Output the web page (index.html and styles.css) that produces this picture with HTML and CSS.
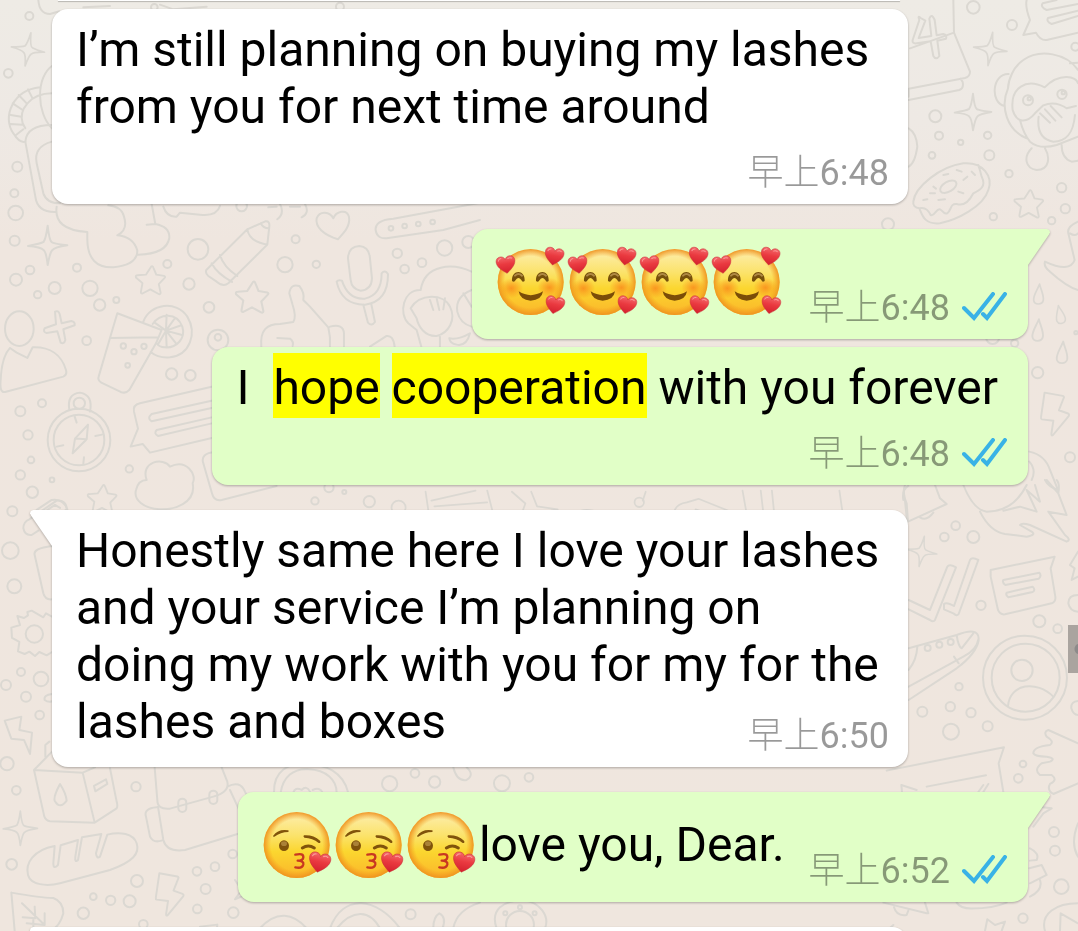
FILE: index.html
```html
<!DOCTYPE html>
<html lang="en">
<head>
<meta charset="utf-8">
<meta name="viewport" content="width=device-width, initial-scale=1">
<title>Chat</title>
<link rel="stylesheet" href="styles.css">
</head>
<body>
<svg class="defs" aria-hidden="true">
  <defs>
    <linearGradient id="skin" x1="0" y1="0" x2="0" y2="1">
      <stop offset="0" stop-color="#fdeeb0"/><stop offset=".35" stop-color="#fbe36c"/><stop offset=".6" stop-color="#fbd62f"/><stop offset="1" stop-color="#fbb52a"/>
    </linearGradient>
    <radialGradient id="rim" cx=".5" cy=".5" r=".5">
      <stop offset=".78" stop-color="#f39a1e" stop-opacity="0"/><stop offset="1" stop-color="#ee9220" stop-opacity=".95"/>
    </radialGradient>
    <radialGradient id="blush"><stop offset="0" stop-color="#f9861c" stop-opacity=".8"/><stop offset="1" stop-color="#f9861c" stop-opacity="0"/></radialGradient>
    <linearGradient id="red" x1="0" y1="0" x2="0" y2="1"><stop offset="0" stop-color="#f4686b"/><stop offset=".45" stop-color="#ea3a40"/><stop offset="1" stop-color="#d4202d"/></linearGradient>
    <symbol id="heart" viewBox="0 0 60 56" overflow="visible">
      <path d="M30 54C20 46 2 34 1 18C0 6 8 1 16 1C23 1 28 5 30 11C32 5 37 1 44 1C52 1 60 6 59 18C58 34 40 46 30 54Z" fill="url(#red)" stroke="#c92834" stroke-width="1.5"/>
      <path d="M8 13Q10 6 17 6M38 9Q44 5 50 9" fill="none" stroke="#fa9a97" stroke-width="3" stroke-linecap="round"/>
    </symbol>
    <symbol id="loved" viewBox="54 47 216 216" overflow="visible">
      <circle cx="155" cy="155" r="99" fill="url(#skin)"/><circle cx="155" cy="155" r="99" fill="url(#rim)"/>
      <ellipse cx="97" cy="174" rx="36" ry="30" fill="url(#blush)"/><ellipse cx="211" cy="172" rx="36" ry="30" fill="url(#blush)"/>
      <path d="M99 152C97 116 139 116 137 152Q130 158 127 149Q118 137 110 149Q106 157 99 152ZM171 152C169 116 211 116 209 152Q202 158 199 149Q190 137 182 149Q178 157 171 152Z" fill="#76500b"/>
      <path d="M108 136Q118 126 129 136M180 136Q190 126 201 136" fill="none" stroke="#b08a45" stroke-width="6" stroke-linecap="round"/>
      <path d="M119 183Q155 206 192 183Q188 210 155 211Q123 209 119 183Z" fill="#7b4d08"/>
      <use href="#heart" x="52" y="76" width="58" height="56" transform="rotate(-8 81 104)"/>
      <use href="#heart" x="196" y="51" width="58" height="56" transform="rotate(10 225 79)"/>
      <use href="#heart" x="198" y="197" width="58" height="56" transform="rotate(12 227 225)"/>
    </symbol>
    <symbol id="kiss" viewBox="45 56 216 216" overflow="visible">
      <circle cx="146" cy="164" r="99" fill="url(#skin)"/><circle cx="146" cy="164" r="99" fill="url(#rim)"/>
      <path d="M75 137Q91 115 120 120Q124 121 121 125Q98 125 79 139Q75 140 75 137ZM168 135Q196 133 216 151Q220 158 212 158Q194 143 169 142Q164 138 168 135Z" fill="#80530b"/>
      <ellipse cx="108" cy="166" rx="15" ry="16" fill="#80530b"/><ellipse cx="108" cy="160" rx="9" ry="7" fill="#aa8138"/>
      <path d="M163 173Q181 161 199 173" fill="none" stroke="#80530b" stroke-width="9" stroke-linecap="round"/>
      <path d="M142 193Q167 187 166 201Q165 211 149 211Q168 212 166 222Q162 236 142 231" fill="none" stroke="#c83721" stroke-width="7" stroke-linecap="round" stroke-linejoin="round"/>
      <use href="#heart" x="181" y="186" width="66" height="63" transform="rotate(12 214 217)"/>
    </symbol>
    <symbol id="ticks" viewBox="0 0 45 29">
      <path d="M2 16L12 26L31 2M21 22L25 26L43 2" fill="none" stroke="#39b2e6" stroke-width="4" stroke-linecap="round" stroke-linejoin="miter"/>
    </symbol>
    <symbol id="spark" viewBox="-60 -60 120 120" overflow="visible"><path d="M0 -58Q5 -10 14 -8Q28 -3 58 0Q20 6 14 14Q7 20 0 58Q-4 20 -12 14Q-20 5 -58 2Q-20 -5 -12 -10Q-5 -20 0 -58Z"/></symbol>
    <symbol id="star" viewBox="-50 -50 100 100" overflow="visible"><path d="M3 -44Q7 -48 10 -40L19 -18L44 -14Q50 -12 45 -7L27 12L33 40Q32 47 25 43L0 29L-25 42Q-31 43 -30 36L-25 9L-46 -9Q-48 -16 -41 -16L-14 -18Z"/></symbol>
    <symbol id="bolt" viewBox="0 0 90 145" overflow="visible"><path d="M12 4L68 14Q74 16 70 22L56 58L84 68Q89 70 86 76L38 134Q32 138 33 130L39 90L4 86Q0 85 1 80Z"/></symbol>
    <symbol id="drop" viewBox="0 0 40 80" overflow="visible"><path d="M24 3C28 22 40 42 37 60C33 78 6 77 3 60C1 44 15 25 24 3Z"/></symbol>
  </defs>
</svg>

<main class="chat">
  <svg class="wallpaper" viewBox="0 0 1078 931" preserveAspectRatio="xMinYMin slice" aria-hidden="true">
    <g transform="scale(.3333)">
      <path d="M115 0Q118 42 150 42L178 34M250 22L330 18M480 14L520 28L620 20"/>
      <use href="#spark" x="32" y="96" width="104" height="104" transform="rotate(10 84 148)"/>
      <use href="#spark" x="82" y="675" width="122" height="122"/>
      <path d="M160 195C105 230 110 340 156 385M120 262C40 270 5 350 40 400Q58 430 76 425M156 280C90 280 55 330 68 370L76 385M32 345L64 350M38 310L68 330M56 285L80 310M84 268L98 296M32 372L66 374M48 405L70 388"/>
      <path d="M156 375Q80 375 76 425L106 590Q112 638 168 636M156 425Q100 440 110 490L130 580Q140 610 180 610"/>
      <path d="M170 620Q160 690 262 696L262 720Q264 805 340 802Q412 795 412 752Q400 710 352 706M352 706Q385 690 372 650Q365 620 325 616M455 612L466 672Q510 680 508 714Q500 762 414 764M440 674L466 672"/>
      <path d="M490 620Q500 652 530 650L540 638L600 644Q650 650 660 618M805 622L830 620M840 612Q855 640 832 658M870 620L900 620M915 612Q930 640 905 652"/>
      <path d="M619 810L742 688L796 664Q810 662 808 680L802 734L685 850Q670 862 650 845L625 828Q615 820 619 810ZM742 688Q748 725 802 734M782 670Q790 685 806 685M660 765Q670 800 712 828M635 790Q650 820 696 846"/>
      <path d="M1014 718C970 705 945 680 950 655C960 630 990 635 1000 655C1008 635 1040 625 1047 650C1052 680 1030 700 1014 718Z"/>
      <path d="M1440 608L1180 656Q1125 660 1127 690Q1132 720 1165 714L1330 690L1440 660"/>
      <path d="M1044 775Q1045 740 1078 738Q1108 740 1110 775L1116 835Q1115 870 1082 872Q1055 868 1052 840ZM1010 845Q1015 838 1026 842Q1045 900 1095 896Q1145 885 1145 820Q1155 808 1164 822Q1165 905 1095 914Q1025 915 1010 845ZM1090 914L1104 968Q1115 980 1125 966L1114 912"/>
      <use href="#star" x="402" y="794" width="98" height="94"/>
      <use href="#star" x="704" y="840" width="104" height="104"/>
      <use href="#star" x="260" y="1450" width="92" height="94"/>
      <ellipse cx="58" cy="986" rx="43" ry="52"/><path d="M30 1044Q5 1070 2 1140Q-2 1180 15 1176L190 1130Q202 1125 198 1110C185 1065 150 1040 98 1042L82 1074L50 1058Z"/>
      <path d="M165 935Q175 930 179 942L185 970L214 963Q226 965 224 976L190 988L196 1020Q192 1034 182 1028L172 994L140 999Q128 996 134 985L168 973Z"/>
      <path d="M352 940L485 990L468 1030L388 1170Q378 1182 362 1176L304 1148Q292 1140 296 1130L330 1014ZM330 1014L476 1012M430 965C450 910 530 900 562 950C592 1000 570 1065 510 1072Q475 1075 452 1056M458 972C480 940 530 935 547 980C558 1015 530 1045 494 1042Q478 1042 470 1030M498 992L500 944M498 992L525 954M498 992L544 976M498 992L546 1005M498 992L528 1030M498 992L500 1042M498 992L476 1030M498 992L464 968"/>
      <path d="M784 1040C780 990 800 972 840 972L880 966Q890 950 878 915L868 880Q872 850 898 858Q915 880 910 900L930 920L985 982Q992 1010 990 1040M832 1014L870 1016Q882 1025 878 1038M990 980Q1030 970 1032 1000L1032 1040M1110 1040L1160 1008Q1180 1005 1184 1040"/>
      <circle cx="237" cy="1320" r="94"/><circle cx="237" cy="1320" r="76"/><path d="M208 1230Q200 1182 240 1178Q280 1185 270 1235"/><circle cx="238" cy="1210" r="17"/><path d="M264 1274L225 1316L218 1360L260 1318ZM225 1316L260 1318M224 1250L230 1268M170 1340L190 1336M252 1372L250 1390M286 1308L306 1304"/>
      <path d="M645 1158L420 1210Q398 1215 402 1235L414 1286L392 1340L428 1332L450 1358L645 1312M645 1200L455 1242Q440 1255 455 1264L645 1222M645 1250L470 1290Q460 1300 474 1308L645 1268"/>
      <path d="M440 1440C420 1385 490 1370 510 1400C560 1375 592 1425 578 1450C590 1510 520 1530 480 1528C430 1525 400 1500 408 1470Q415 1440 440 1440ZM645 1356Q600 1360 610 1390L636 1480Q642 1505 665 1500L830 1458"/>
      <path d="M110 1530L155 1500Q190 1495 202 1528M142 1530L165 1515L180 1524"/>
      <g>
        <circle cx="88" cy="48" r="12"/><circle cx="25" cy="220" r="13"/><circle cx="52" cy="500" r="15"/><circle cx="43" cy="580" r="12"/><circle cx="47" cy="639" r="22"/><circle cx="44" cy="722" r="15"/><circle cx="90" cy="810" r="13"/><circle cx="48" cy="839" r="18"/><circle cx="231" cy="803" r="12"/><circle cx="113" cy="884" r="11"/><circle cx="164" cy="864" r="18"/><circle cx="270" cy="865" r="23"/><circle cx="299" cy="915" r="17"/><circle cx="349" cy="900" r="9"/><circle cx="502" cy="792" r="12"/><circle cx="594" cy="748" r="31"/><circle cx="567" cy="852" r="17"/><circle cx="627" cy="922" r="16"/><circle cx="654" cy="1020" r="31"/><circle cx="654" cy="1012" r="10"/><circle cx="855" cy="794" r="23"/><circle cx="887" cy="718" r="12"/><circle cx="949" cy="793" r="11"/><circle cx="260" cy="1022" r="13"/><circle cx="515" cy="1122" r="17"/><circle cx="571" cy="1126" r="16"/><circle cx="370" cy="1038" r="8"/><circle cx="402" cy="1055" r="8"/><circle cx="432" cy="1039" r="8"/><circle cx="383" cy="1096" r="7"/><circle cx="61" cy="1234" r="15"/><circle cx="126" cy="1210" r="12"/><circle cx="84" cy="1305" r="14"/><circle cx="93" cy="1380" r="10"/><circle cx="61" cy="1425" r="14"/><circle cx="156" cy="1440" r="7"/><circle cx="388" cy="1407" r="11"/><circle cx="97" cy="1477" r="17"/><circle cx="37" cy="1534" r="15"/><circle cx="725" cy="618" r="16"/><circle cx="987" cy="1463" r="14"/><circle cx="1033" cy="1476" r="6"/><circle cx="945" cy="1503" r="11"/><circle cx="1108" cy="1505" r="17"/>
        <circle cx="1173" cy="685" r="7"/><circle cx="1214" cy="678" r="7"/><circle cx="1255" cy="672" r="7"/><circle cx="1298" cy="666" r="7"/><circle cx="1192" cy="760" r="14"/><circle cx="1214" cy="807" r="13"/><circle cx="1266" cy="788" r="13"/><circle cx="1334" cy="744" r="23"/><circle cx="1405" cy="726" r="18"/><circle cx="463" cy="22" r="10"/><circle cx="1020" cy="20" r="12"/>
      </g>
      <path d="M1262 870C1275 790 1360 790 1415 815M1260 870C1210 870 1195 940 1225 970L1250 990M1232 925C1260 880 1330 880 1350 920C1370 960 1345 1000 1310 1008C1275 1010 1255 980 1250 955L1232 925M1250 990L1264 1040M1290 900L1300 930M1310 895L1318 930M1335 895L1330 928M1415 870Q1365 890 1372 935Q1380 970 1415 980M1390 880L1415 920M1348 1015Q1375 1020 1410 1000Q1400 1040 1370 1034Q1350 1030 1348 1015M1320 1010L1320 1040"/>
    </g>
    <g transform="translate(0 480) scale(.3333)">
      <path d="M70 145Q70 125 88 118L170 62Q200 60 200 88L140 135M70 145Q75 168 95 165L115 152M156 198Q98 205 104 225L130 340Q135 360 156 358"/>
      <circle cx="103" cy="462" r="26"/><path d="M156 410L138 400L130 412L95 392L82 396L84 406L72 414L52 408L60 435L34 443L36 474L58 486L54 514L74 522L88 515L105 528L118 516L140 526L156 516"/>
      <circle cx="31" cy="212" r="25"/><circle cx="43" cy="319" r="21"/><circle cx="63" cy="576" r="12"/><circle cx="123" cy="597" r="22"/><circle cx="18" cy="615" r="15"/><circle cx="78" cy="650" r="15"/><circle cx="119" cy="705" r="13"/><circle cx="21" cy="851" r="20"/><circle cx="49" cy="931" r="13"/><circle cx="35" cy="1153" r="16"/><circle cx="408" cy="920" r="14"/>
      <path d="M156 642Q130 645 134 660Q145 668 156 664M14 722L64 710L58 750L96 758L90 822L72 780L34 776Z"/>
      <path d="M156 815L102 870L133 1010Q138 1022 150 1024L284 1028L350 985Q354 978 350 965L330 865M102 870L248 878L284 1028M248 878L285 862M136 830L136 795L148 785M180 912Q160 950 164 962Q180 990 200 962Q198 940 180 912ZM282 918L318 898L322 912L286 934Z"/>
      <use href="#spark" x="8" y="992" width="106" height="106"/>
      <path d="M164 1098C100 1110 75 1150 84 1185C92 1215 140 1220 180 1210L330 1170C400 1145 420 1120 410 1090C400 1060 360 1055 322 1064L300 1130Q290 1138 288 1120L304 1062L246 1072L234 1140Q224 1150 226 1130L234 1080L182 1096L174 1155Q160 1170 160 1150Z"/>
      <path d="M464 862L472 960Q472 990 510 986L640 950Q690 935 682 905L665 862M474 980L490 1080Q500 1118 555 1110L720 1060M470 982Q430 985 438 1010L450 1070Q460 1090 485 1082M682 920Q720 900 735 935L742 950M690 930L720 995"/>
      <rect x="535" y="956" width="24" height="40" rx="12"/><rect x="628" y="932" width="24" height="40" rx="12"/>
      <use href="#bolt" x="466" y="1176" width="88" height="140"/>
      <path d="M34 1238Q130 1255 160 1254Q190 1265 190 1300Q180 1340 150 1354M34 1238L44 1353M66 1270L134 1335M104 1280L106 1315L68 1312M134 1300L134 1335L80 1330M100 1315L100 1350"/>
      <circle cx="411" cy="1203" r="18"/><circle cx="280" cy="1250" r="10"/><circle cx="332" cy="1261" r="14"/><circle cx="389" cy="1264" r="18"/><circle cx="250" cy="1300" r="17"/><circle cx="591" cy="1174" r="13"/><circle cx="645" cy="1160" r="13"/><circle cx="617" cy="1227" r="15"/><circle cx="592" cy="1287" r="13"/><circle cx="698" cy="1122" r="13"/><circle cx="700" cy="1298" r="16"/><circle cx="430" cy="1333" r="13"/>
      <path d="M705 1200L725 1230L705 1258L735 1245M600 1340L652 1334L650 1354"/>
      <path d="M822 938C820 870 870 850 910 852C980 850 1030 880 1044 936M842 938C850 890 880 865 925 868C980 870 1010 900 1010 938M880 938Q885 920 905 930Q920 915 930 935M938 930Q960 920 968 938M1360 862Q1370 905 1400 900Q1425 885 1400 862"/>
      <circle cx="1169" cy="911" r="23"/><circle cx="1245" cy="880" r="13"/><circle cx="1304" cy="906" r="17"/><circle cx="1506" cy="910" r="24"/><circle cx="1587" cy="892" r="13"/>
      <path d="M780 1345C830 1290 880 1300 920 1345M990 1345C1030 1240 1130 1250 1200 1345M1010 1345C1060 1285 1110 1290 1140 1345M1360 1345Q1370 1290 1440 1268M1300 1345Q1300 1310 1318 1300Q1340 1310 1328 1345"/>
      <circle cx="1232" cy="1303" r="15"/><path d="M1490 1345C1470 1290 1510 1260 1570 1262C1620 1265 1650 1310 1635 1345"/><circle cx="1560" cy="1335" r="42"/><circle cx="1560" cy="1282" r="6"/><circle cx="1516" cy="1300" r="6"/><circle cx="1604" cy="1300" r="6"/>
    </g>
    <g class="strip" transform="translate(0 480) scale(.587)">
      <path d="M725 20L735 88M735 35L810 18M740 45L830 38M830 18L848 88M770 88Q775 60 800 64Q820 75 815 88M872 20L895 40L880 82L905 60L950 50L915 45L905 20M980 88Q970 45 1010 52L1075 85M1140 88L1150 50Q1155 40 1170 38L1190 32L1210 40L1240 52L1246 88M1185 50L1208 58L1206 68L1182 62ZM1265 18L1275 75Q1290 90 1302 70L1296 18M1315 18L1322 88M1430 18L1440 88M1480 88L1490 55L1490 88M1540 20L1545 70"/>
      <circle cx="679" cy="47" r="12"/><circle cx="1089" cy="38" r="8"/><path d="M1095 35L1100 20"/>
    </g>
    <g transform="translate(880 0) scale(.3333)">
      <path d="M220 0L222 98L270 215Q270 230 255 234L86 266M90 145L222 98M86 300L238 270Q252 265 248 246L242 236M86 290L86 266M122 54Q112 45 118 60L98 120Q96 132 110 130L152 124L160 168Q168 182 178 168L172 122L198 116Q202 104 190 102L170 106L164 60Q155 38 148 56L154 108L116 114L136 62Z"/>
      <path d="M440 0Q435 20 450 60L430 105L468 98Q480 122 500 120L594 98M594 12L500 30Q480 20 488 10L530 0M594 48L515 72Q498 65 504 54L594 32"/>
      <use href="#spark" x="278" y="95" width="106" height="104" transform="rotate(8 331 147)"/><use href="#spark" x="222" y="278" width="114" height="116"/>
      <path d="M594 210C560 160 480 145 430 180C400 200 385 240 384 265C360 320 380 390 440 415M386 222C335 220 330 310 374 318M398 330C390 260 440 235 494 262C540 215 590 230 594 250M398 330C410 370 440 370 465 340L490 316C530 300 560 325 560 325L588 318M420 360Q430 400 450 425Q480 450 530 435L594 410M476 350C470 400 490 420 520 425C560 425 580 400 585 345M480 340L510 368M495 328L526 362M512 318L545 352M455 445C430 470 435 505 470 510C510 510 510 470 495 445M545 435Q545 475 575 485L594 482M570 190L594 188"/>
      <circle cx="444" cy="301" r="15"/><circle cx="448" cy="296" r="5"/><circle cx="546" cy="283" r="14"/><circle cx="550" cy="278" r="5"/>
      <path d="M86 385Q110 400 112 440Q105 490 86 500"/>
      <path d="M100 605C105 560 180 500 250 490C310 485 340 530 325 570C310 620 230 660 180 670C130 675 125 640 118 625C105 625 98 615 100 605M118 625C135 620 145 630 152 645C165 650 168 625 180 628C190 632 190 645 202 640C215 630 210 610 230 612C255 620 270 600 280 580C300 570 320 560 305 530Q300 510 295 495"/><ellipse cx="205" cy="560" rx="27" ry="15" transform="rotate(-30 205 560)"/>
      <path d="M130 600L142 598M160 560L168 566M190 525L205 522M230 510L245 515M150 580L165 580M250 540L262 530M275 515L285 525M235 575L250 580M175 600L195 598"/>
      <use href="#star" x="400" y="566" width="92" height="92"/>
      <path d="M594 665Q560 680 565 700L584 780Q570 820 495 785Q490 800 510 815Q560 860 594 870M570 700Q585 710 594 700"/>
      <use href="#drop" x="458" y="850" width="35" height="68"/><use href="#drop" x="522" y="914" width="35" height="62" transform="rotate(-15 540 945)"/><use href="#drop" x="452" y="955" width="42" height="74"/><use href="#drop" x="525" y="1022" width="42" height="74"/>
      <use href="#bolt" x="482" y="1172" width="88" height="146"/>
      <circle cx="280" cy="22" r="19"/><circle cx="396" cy="75" r="15"/><circle cx="166" cy="349" r="18"/><circle cx="177" cy="407" r="12"/><circle cx="242" cy="427" r="8"/><circle cx="323" cy="406" r="11"/><circle cx="156" cy="466" r="10"/><circle cx="328" cy="466" r="15"/><circle cx="387" cy="521" r="11"/><circle cx="545" cy="563" r="14"/><circle cx="556" cy="626" r="14"/><circle cx="515" cy="662" r="11"/><circle cx="340" cy="650" r="11"/><circle cx="24" cy="673" r="18"/><circle cx="473" cy="1118" r="17"/><circle cx="570" cy="1372" r="15"/><circle cx="404" cy="1030" r="11"/><circle cx="338" cy="1012" r="20"/><circle cx="586" cy="140" r="12"/><circle cx="588" cy="998" r="5"/>
      <path d="M448 1355Q495 1365 510 1410L534 1470Q505 1460 495 1440M448 1385Q470 1410 455 1440M70 1500Q65 1470 85 1458"/>
    </g>
    <g transform="translate(880 480) scale(.3333)">
      <path d="M75 15Q65 40 80 70L84 125L200 72L180 55L165 15M120 112Q140 125 160 98M250 15Q280 90 320 95Q400 95 440 15M300 95Q330 155 375 162L440 170Q470 165 455 155L420 135Q425 128 450 135L560 185Q575 180 555 165L505 95L560 105L535 40Q540 10 530 0M370 92L420 80L470 95L440 30L480 65L465 15M500 0L535 40"/>
      <use href="#spark" x="78" y="165" width="95" height="98" transform="rotate(10 125 212)"/>
      <path d="M86 360L150 390L202 260Q208 250 228 262L165 420Q160 428 150 420L86 388M192 372Q200 365 222 378L270 240Q276 230 295 240L236 402Q230 410 220 400L192 388Z"/>
      <path d="M332 270L524 230L512 265L526 350Q528 365 515 370L375 403Q360 405 354 390L332 290ZM370 300L478 278Q486 288 476 296L376 315Q366 308 370 300ZM380 338L458 320Q468 330 458 336L385 352Q376 345 380 338Z"/>
      <path d="M594 215L570 255L584 265L575 300L594 290M594 345Q565 345 565 370Q570 395 594 395M594 663Q572 665 574 685Q580 705 594 705"/>
      <path d="M86 505L230 465Q295 440 296 475Q290 510 250 530L86 620M86 660L230 565Q290 520 296 480M230 465Q235 500 245 505L280 460M222 530L236 550M86 570Q110 540 112 500"/>
      <circle cx="143" cy="504" r="9"/><circle cx="178" cy="494" r="9"/><circle cx="212" cy="486" r="9"/>
      <circle cx="435" cy="593" r="126"/><circle cx="437" cy="593" r="102"/><circle cx="426" cy="571" r="32"/><path d="M384 678C390 610 470 600 520 650"/>
      <circle cx="227" cy="137" r="13"/><circle cx="193" cy="171" r="13"/><circle cx="280" cy="171" r="18"/><circle cx="303" cy="376" r="14"/><circle cx="478" cy="424" r="18"/><circle cx="533" cy="446" r="13"/><circle cx="237" cy="620" r="11"/><circle cx="127" cy="695" r="15"/><circle cx="211" cy="680" r="14"/><circle cx="273" cy="698" r="14"/><circle cx="213" cy="755" r="24"/><circle cx="323" cy="739" r="15"/><circle cx="429" cy="852" r="10"/><circle cx="415" cy="895" r="13"/><circle cx="522" cy="1056" r="15"/><circle cx="525" cy="1112" r="15"/><circle cx="544" cy="1220" r="22"/><circle cx="429" cy="1315" r="14"/>
      <path d="M20 872L372 802L356 850L370 936M140 920L318 886M66 936L64 915L110 930M295 936L310 915M310 936L325 912M594 790L505 750Q490 755 500 770Q525 785 510 795Q460 800 460 820Q465 830 500 830Q530 835 510 845L485 850Q460 870 480 885L515 885Q535 900 510 912Q500 930 520 942L594 910M594 1030Q570 1090 594 1130M450 1105Q480 1120 470 1140L450 1142M448 1165L485 1155L500 1185L450 1210M480 1200Q490 1230 450 1250M460 1040L490 1000L515 985L475 980L460 1005"/>
      <path d="M230 1268Q240 1285 275 1286Q340 1285 380 1268M10 1268L140 1300L145 1300L135 1268M42 1282Q50 1310 80 1305L85 1292M495 1353C480 1300 530 1270 594 1270M540 1353L542 1300L594 1330M315 1353L322 1318L345 1335L375 1325L365 1353M20 1353L40 1335"/>
    </g>
  </svg>

  <div class="edge-above" aria-hidden="true"></div>

  <article class="bubble received">
    <p class="text">I’m still planning on buying my lashes from you for next time around</p>
    <footer class="meta"><time datetime="06:48"><span class="period">早上</span>6:48</time></footer>
  </article>

  <article class="bubble sent inline tail first">
    <p class="text"><svg class="emoji" role="img" aria-label="smiling face with hearts"><use href="#loved"/></svg><svg class="emoji" role="img" aria-label="smiling face with hearts"><use href="#loved"/></svg><svg class="emoji" role="img" aria-label="smiling face with hearts"><use href="#loved"/></svg><svg class="emoji" role="img" aria-label="smiling face with hearts"><use href="#loved"/></svg></p>
    <footer class="meta"><time datetime="06:48"><span class="period">早上</span>6:48</time><svg class="ticks" role="img" aria-label="Read"><use href="#ticks"/></svg></footer>
  </article>

  <article class="bubble sent">
    <p class="text">I&nbsp; <mark>hope</mark> <mark>cooperation</mark> with you forever</p>
    <footer class="meta"><time datetime="06:48"><span class="period">早上</span>6:48</time><svg class="ticks" role="img" aria-label="Read"><use href="#ticks"/></svg></footer>
  </article>

  <article class="bubble received wrapped tail first">
    <p class="text">Honestly same here I love your lashes and your service I’m planning on doing my work with you for my for the lashes and boxes</p>
    <footer class="meta"><time datetime="06:50"><span class="period">早上</span>6:50</time></footer>
  </article>

  <article class="bubble sent inline tail first">
    <p class="text"><svg class="emoji" role="img" aria-label="face blowing a kiss"><use href="#kiss"/></svg><svg class="emoji" role="img" aria-label="face blowing a kiss"><use href="#kiss"/></svg><svg class="emoji" role="img" aria-label="face blowing a kiss"><use href="#kiss"/></svg>love you, Dear.</p>
    <footer class="meta"><time datetime="06:52"><span class="period">早上</span>6:52</time><svg class="ticks" role="img" aria-label="Read"><use href="#ticks"/></svg></footer>
  </article>

  <div class="bubble received next tail first" aria-hidden="true"></div>

  <div class="scroll-handle" aria-hidden="true"></div>
</main>
</body>
</html>
```
FILE: styles.css
```css
* { box-sizing: border-box; }

body {
  margin: 0;
  font-family: Roboto, "Noto Sans CJK SC", sans-serif;
  color: #000;
}

.defs { position: absolute; width: 0; height: 0; }

.chat {
  position: relative;
  isolation: isolate;
  display: flex;
  flex-direction: column;
  height: 100vh;
  padding: 0 50px 0 52px;
  overflow: hidden;
  background: linear-gradient(#eeebe5 0, #eee9e4 120px, #efe6df 240px, #efe6de 100%);
}

.wallpaper {
  position: absolute;
  inset: 0;
  z-index: -1;
  width: 100%;
  height: 100%;
  fill: none;
  stroke: #dbd8d2;
  stroke-width: 6;
  stroke-linecap: round;
  stroke-linejoin: round;
}
.strip { stroke-width: 3; }

.edge-above {
  flex: none;
  width: 842px;
  max-width: 100%;
  height: 1px;
  margin-left: 6px;
  background: #fff;
  box-shadow: 0 1px 1px rgba(0, 0, 0, .25);
}

.bubble {
  --fill: #fff;
  position: relative;
  flex: none;
  display: flex;
  flex-direction: column;
  max-width: 856px;
  margin-top: 8px;
  padding: 12px 19px 9px 25px;
  border-radius: 16px;
  background: var(--fill);
  filter: drop-shadow(0 1px 1px rgba(0, 0, 0, .28));
}

.received { align-self: flex-start; padding-left: 24px; }
.sent { --fill: #e1ffc7; align-self: flex-end; }
.first { margin-top: 25px; }

.tail::after {
  content: "";
  position: absolute;
  top: 0;
  width: 40px;
  height: 36px;
  background: var(--fill);
}
.sent.tail { border-top-right-radius: 0; }
.sent.tail::after {
  right: -22px;
  clip-path: polygon(0 0, 92% 0, 98% 3%, 100% 9%, 97% 16%, 45% 100%, 0 100%);
}
.received.tail { border-top-left-radius: 0; }
.received.tail::after {
  left: -22px;
  clip-path: polygon(100% 0, 8% 0, 2% 3%, 0 9%, 3% 16%, 55% 100%, 100% 100%);
}

.text {
  position: relative;
  z-index: 1;
  margin: 0 11px 0 0;
  font-size: 48px;
  line-height: 57px;
}

.received .text { margin-right: 0; }

mark {
  padding: 6px 0 2px;
  background: #ff0;
  color: inherit;
}

.meta {
  z-index: 1;
  display: flex;
  align-items: flex-end;
  align-self: flex-end;
  gap: 12px;
  margin-top: 17px;
  font-size: 36px;
  line-height: 43px;
  color: rgba(0, 0, 0, .4);
}

.sent .meta { margin-right: 2px; }

.period { font-weight: 300; }

.ticks {
  width: 45px;
  height: 29px;
  margin-bottom: 9px;
}

.inline {
  flex-direction: row;
  gap: 13px;
}
.inline .text {
  display: flex;
  align-items: center;
  height: 81px;
  margin-bottom: 8px;
}
.inline .meta { margin-top: 0; }

.wrapped { display: flow-root; }
.wrapped .text { display: inline; }
.wrapped .meta { float: right; margin-top: 22px; }

.emoji {
  flex: none;
  width: 72px;
  height: 72px;
  overflow: visible;
}

.next {
  width: 856px;
  height: 80px;
}

.scroll-handle {
  position: absolute;
  top: 625px;
  right: 0;
  width: 10px;
  height: 48px;
  background: radial-gradient(circle at 12px 24px, #8d8a8a 0 5px, #aaa49f 6px);
}
```
